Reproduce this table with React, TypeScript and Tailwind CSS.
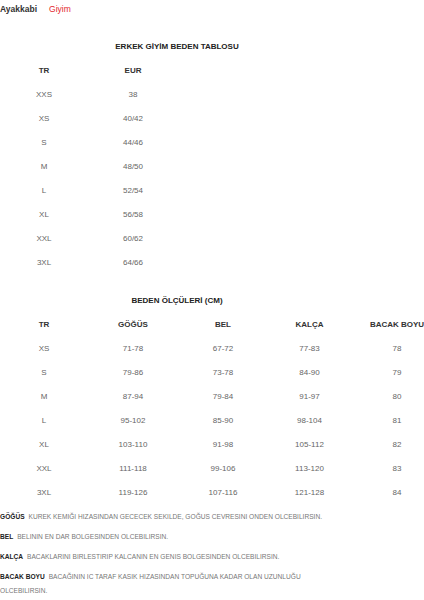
const sizes1 = [
  ["XXS", "38"],
  ["XS", "40/42"],
  ["S", "44/46"],
  ["M", "48/50"],
  ["L", "52/54"],
  ["XL", "56/58"],
  ["XXL", "60/62"],
  ["3XL", "64/66"],
];

const sizes2 = [
  ["XS", "71-78", "67-72", "77-83", "78"],
  ["S", "79-86", "73-78", "84-90", "79"],
  ["M", "87-94", "79-84", "91-97", "80"],
  ["L", "95-102", "85-90", "98-104", "81"],
  ["XL", "103-110", "91-98", "105-112", "82"],
  ["XXL", "111-118", "99-106", "113-120", "83"],
  ["3XL", "119-126", "107-116", "121-128", "84"],
];

const notes = [
  ["GÖĞÜS", "KUREK KEMIĞI HIZASINDAN GECECEK SEKILDE, GOĞUS CEVRESINI ONDEN OLCEBILIRSIN."],
  ["BEL", "BELININ EN DAR BOLGESINDEN OLCEBILIRSIN."],
  ["KALÇA", "BACAKLARINI BIRLESTIRIP KALCANIN EN GENIS BOLGESINDEN OLCEBILIRSIN."],
  ["BACAK BOYU", "BACAĞININ IC TARAF KASIK HIZASINDAN TOPUĞUNA KADAR OLAN UZUNLUĞU OLCEBILIRSIN."],
];

const cols = "grid grid-cols-[88px_90px_90px_83px_92px]";

export default function App() {
  return (
    <div className="w-[424px] h-[600px] overflow-hidden bg-white font-['Liberation_Sans',Arial,sans-serif]">
      {/* Tabs */}
      <div className="flex items-center h-[18px] gap-[12px] text-[8.5px]">
        <span className="font-bold text-[#333]">Ayakkabi</span>
        <span className="text-[#e3262e]">Giyim</span>
      </div>

      {/* Beden tablosu */}
      <div className="mt-[17px] w-[354px] h-[24px] flex items-center justify-center text-[8px] font-bold text-[#222]">
        ERKEK GİYİM BEDEN TABLOSU
      </div>
      <div className={cols + " h-[24px] items-center text-center text-[8px] font-bold text-[#333]"}>
        <span>TR</span>
        <span>EUR</span>
      </div>
      {sizes1.map(([tr, eur]) => (
        <div key={tr} className={cols + " h-[24px] items-center text-center text-[8px] text-[#666]"}>
          <span>{tr}</span>
          <span>{eur}</span>
        </div>
      ))}

      {/* Ölçüler */}
      <div className="mt-[14px] w-[354px] h-[24px] flex items-center justify-center text-[8px] font-bold text-[#222]">
        BEDEN ÖLÇÜLERİ (CM)
      </div>
      <div className={cols + " h-[24px] items-center text-center text-[8px] font-bold text-[#333]"}>
        <span>TR</span>
        <span>GÖĞÜS</span>
        <span>BEL</span>
        <span>KALÇA</span>
        <span className="whitespace-nowrap">BACAK BOYU</span>
      </div>
      {sizes2.map((row) => (
        <div key={row[0]} className={cols + " h-[24px] items-center text-center text-[8px] text-[#666]"}>
          {row.map((v, i) => (
            <span key={i}>{v}</span>
          ))}
        </div>
      ))}

      {/* Notes */}
      <div className="mt-[5px] w-[340px] text-[6.6px] leading-[14px] text-[#777]">
        {notes.map(([label, text]) => (
          <p key={label} className="mb-[6px]">
            <span className="font-bold text-[#222]">{label}</span>
            <span className="ml-[4px]">{text}</span>
          </p>
        ))}
      </div>
    </div>
  );
}
